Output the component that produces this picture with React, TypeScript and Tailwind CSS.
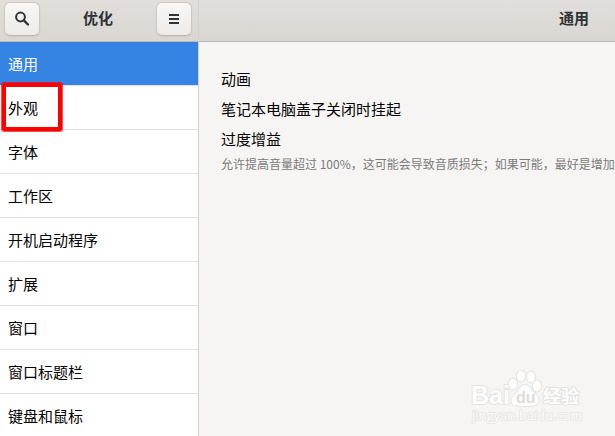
import type { ReactNode } from "react";

const pages = [
  "通用",
  "外观",
  "字体",
  "工作区",
  "开机启动程序",
  "扩展",
  "窗口",
  "窗口标题栏",
  "键盘和鼠标",
];

const settings = [
  { title: "动画" },
  { title: "笔记本电脑盖子关闭时挂起" },
  {
    title: "过度增益",
    hint: "允许提高音量超过 100%，这可能会导致音质损失；如果可能，最好是增加应用程序的音量。",
  },
];

function HeaderButton({ label, children }: { label: string; children: ReactNode }) {
  return (
    <button
      type="button"
      aria-label={label}
      className="mb-1 flex h-[34px] w-9 items-center justify-center rounded-md border border-[#cdc7c2] border-b-[#bfb8b1] bg-linear-to-b from-[#f8f7f6] to-[#edebe9] text-[#2e3436] shadow-xs"
    >
      {children}
    </button>
  );
}

function Sidebar() {
  return (
    <aside className="flex w-[199px] shrink-0 flex-col border-r border-[#d5d0cc] bg-white">
      <header className="flex h-[42px] shrink-0 items-center justify-between border-b border-[#bfb8b1] bg-linear-to-b from-[#e1dedb] to-[#dad6d2] pr-1.5 pl-1">
        <HeaderButton label="搜索">
          <svg viewBox="0 0 16 16" className="size-4" fill="none" stroke="currentColor">
            <circle cx="6.5" cy="6" r="4.4" strokeWidth="2" />
            <path d="M9.8 9.3 14 13.5" strokeWidth="2.4" strokeLinecap="round" />
          </svg>
        </HeaderButton>
        <h1 className="pb-1.5 text-[15px] leading-5 font-bold text-[#2e3436]">优化</h1>
        <HeaderButton label="菜单">
          <svg viewBox="0 0 16 16" className="size-4" fill="currentColor">
            <path d="M3 3h10v2H3zM3 7h10v2H3zM3 11h10v2H3z" />
          </svg>
        </HeaderButton>
      </header>
      <nav>
        {pages.map((page, i) => (
          <a
            key={page}
            href="#"
            aria-current={i === 0 ? "page" : undefined}
            className="relative flex h-11 items-center border-b border-[#e1e1e1] px-2 text-[15px] leading-5 text-black aria-[current=page]:bg-[#3584e4] aria-[current=page]:text-white"
          >
            {page}
            {page === "外观" && (
              <span className="absolute -top-[3px] left-0.5 h-12 w-[60px] rounded-xs border-4 border-[#fe0000] ring-1 ring-[#fe0000]/70" />
            )}
          </a>
        ))}
      </nav>
    </aside>
  );
}

function Watermark() {
  return (
    <svg
      viewBox="0 0 112 56"
      className="absolute right-8 bottom-2.5 h-14 w-28"
      fill="#fdfdfd"
      stroke="#e4e3e1"
      strokeWidth="2"
      paintOrder="stroke"
      strokeLinejoin="round"
      fontFamily='"Liberation Sans", "Noto Sans CJK SC", sans-serif'
      aria-hidden="true"
    >
      <text x="0" y="34" fontSize="25" fontWeight="bold">
        Bai
      </text>
      <ellipse cx="42" cy="14" rx="4" ry="5.5" />
      <ellipse cx="50" cy="6" rx="4.2" ry="5.6" />
      <ellipse cx="60" cy="7" rx="4.2" ry="5.6" />
      <ellipse cx="66" cy="16" rx="4" ry="5.5" />
      <path d="M54 15c5 0 6 5 10 9 3 3 5 5 3 9-2 3-7 3-13 3s-12 0-13-3c-2-4 1-6 4-9 3-3 4-9 9-9z" />
      <text x="45" y="33" fontSize="16" fontWeight="bold" fill="#dddcda" stroke="none">
        du
      </text>
      <text x="72" y="33" fontSize="18" fontWeight="bold">
        经验
      </text>
      <text x="1" y="50" fontSize="13" fontFamily='"Open Sans", sans-serif' strokeWidth="1.5">
        jingyan.baidu.com
      </text>
    </svg>
  );
}

export default function App() {
  return (
    <div className="relative flex h-screen overflow-hidden bg-[#f6f5f4] font-['Noto_Sans_CJK_SC',sans-serif]">
      <Sidebar />
      {/* The content pane keeps its natural width and runs past a narrow window */}
      <main className="min-w-[750px] flex-1">
        <header className="flex h-[42px] items-center justify-center border-b border-[#bfb8b1] bg-linear-to-b from-[#e1dedb] to-[#dad6d2]">
          <h2 className="pb-1.5 text-[15px] leading-5 font-bold text-[#2e3436]">通用</h2>
        </header>
        <ul className="flex flex-col gap-2.5 px-[22px] pt-[27px]">
          {settings.map(({ title, hint }) => (
            <li key={title}>
              <p className="text-[15px] leading-5 text-black">{title}</p>
              {hint && (
                <p className="mt-[5px] text-xs leading-5 whitespace-nowrap text-[#7b7b7a]">{hint}</p>
              )}
            </li>
          ))}
        </ul>
      </main>
      <Watermark />
    </div>
  );
}
